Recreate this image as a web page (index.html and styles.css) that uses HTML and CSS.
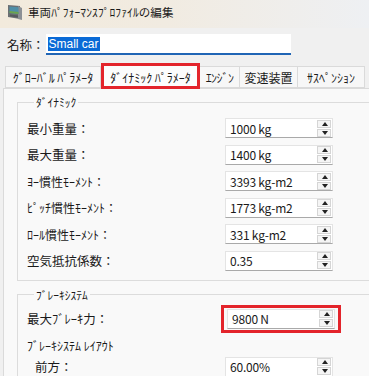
FILE: index.html
```html
<!DOCTYPE html>
<html lang="ja">
<head>
<meta charset="UTF-8" />
<meta name="viewport" content="width=device-width, initial-scale=1" />
<title>車両ﾊﾟﾌｫｰﾏﾝｽﾌﾟﾛﾌｧｲﾙの編集</title>
<link rel="stylesheet" href="styles.css">
</head>
<body>
  <div class="window">
    <div class="titlebar">
      <svg class="app-icon" width="18" height="18" viewBox="0 0 18 18" aria-hidden="true">
        <path d="M3 2 L15 3 L15 16 L3 14 Z" fill="#6b6f73"/>
        <path d="M13 3 L17 5 L17 17 L13 16 Z" fill="#8c9095"/>
        <path d="M4.5 3.5 L13.5 4.3 L13.5 11 L4.5 10 Z" fill="#4f8fa8"/>
        <path d="M4.5 8 L13.5 9 L13.5 11 L4.5 10 Z" fill="#6da34d"/>
        <path d="M5 11.5 L13 12.4 L13 14.5 L5 13.2 Z" fill="#55595d"/>
      </svg>
      <span class="title">車両ﾊﾟﾌｫｰﾏﾝｽﾌﾟﾛﾌｧｲﾙの編集</span>
    </div>

    <div class="name-row">
      <span class="name-label">名称：</span>
      <div class="name-input"><span class="selected">Small car</span></div>
    </div>

    <div class="tabs">
      <div class="tab tab-global">ｸﾞﾛｰﾊﾞﾙ ﾊﾟﾗﾒｰﾀ</div>
      <div class="tab tab-dynamic active">ﾀﾞｲﾅﾐｯｸ ﾊﾟﾗﾒｰﾀ</div>
      <div class="tab tab-engine">ｴﾝｼﾞﾝ</div>
      <div class="tab tab-trans">変速装置</div>
      <div class="tab tab-susp">ｻｽﾍﾟﾝｼｮﾝ</div>
    </div>

    <div class="panel">
      <fieldset class="group dynamics">
        <legend>ﾀﾞｲﾅﾐｯｸ</legend>
        <div class="row"><span class="label">最小重量：</span><div class="spin"><span class="value">1000 kg</span><span class="arrows"><i class="up"></i><i class="down"></i></span></div></div>
        <div class="row"><span class="label">最大重量：</span><div class="spin"><span class="value">1400 kg</span><span class="arrows"><i class="up"></i><i class="down"></i></span></div></div>
        <div class="row"><span class="label small">ﾖｰ慣性ﾓｰﾒﾝﾄ：</span><div class="spin"><span class="value">3393 kg-m2</span><span class="arrows"><i class="up"></i><i class="down"></i></span></div></div>
        <div class="row"><span class="label small">ﾋﾟｯﾁ慣性ﾓｰﾒﾝﾄ：</span><div class="spin"><span class="value">1773 kg-m2</span><span class="arrows"><i class="up"></i><i class="down"></i></span></div></div>
        <div class="row"><span class="label small">ﾛｰﾙ慣性ﾓｰﾒﾝﾄ：</span><div class="spin"><span class="value">331 kg-m2</span><span class="arrows"><i class="up"></i><i class="down"></i></span></div></div>
        <div class="row"><span class="label">空気抵抗係数：</span><div class="spin"><span class="value">0.35</span><span class="arrows"><i class="up"></i><i class="down"></i></span></div></div>
      </fieldset>

      <fieldset class="group brakes">
        <legend>ﾌﾞﾚｰｷｼｽﾃﾑ</legend>
        <div class="row"><span class="label">最大ﾌﾞﾚｰｷ力：</span><div class="highlight"><div class="spin"><span class="value">9800 N</span><span class="arrows"><i class="up"></i><i class="down"></i></span></div></div></div>
        <div class="subhead">ﾌﾞﾚｰｷｼｽﾃﾑ ﾚｲｱｳﾄ</div>
        <div class="row indent"><span class="label">前方：</span><div class="spin"><span class="value">60.00%</span><span class="arrows"><i class="up"></i><i class="down"></i></span></div></div>
      </fieldset>
    </div>
  </div>
</body>
</html>
```

FILE: styles.css
```css
/* Base */
* {
  box-sizing: border-box;
}
html, body {
  margin: 0;
  width: 369px;
  height: 376px;
  overflow: hidden;
  background: #f0f0f0;
  font-family: "Noto Sans CJK JP", "Noto Sans", sans-serif;
  font-size: 12px;
  color: #1a1a1a;
}

.window {
  width: 369px;
  height: 376px;
  overflow: hidden;
}

/* Title bar */
.titlebar {
  height: 28px;
  display: flex;
  align-items: center;
  gap: 5px;
  padding-left: 5px;
  background: linear-gradient(90deg, #f2eadc 0%, #f1ebe1 45%, #eef0f3 100%);
}
.title {
  font-size: 11.5px;
  letter-spacing: 0.1px;
  margin-top: -4px;
}
.app-icon {
  margin-top: -5px;
}

/* Name */
.name-row {
  display: flex;
  align-items: center;
  height: 32px;
  padding-left: 7px;
  gap: 1px;
}
.name-label {
  font-size: 12.5px;
}
.name-input {
  width: 245px;
  height: 21px;
  background: #fff;
  border-bottom: 2px solid #2065b5;
  padding: 3px 0 0 2px;
  font-family: "Liberation Sans", Arial, sans-serif;
  font-size: 12px;
  line-height: 14px;
}
.selected {
  background: #0a6ad6;
  color: #fff;
  padding: 0 1px;
}

/* Tabs */
.tabs {
  display: flex;
  height: 24px;
  margin-top: 4px;
  padding-left: 5px;
  align-items: flex-end;
}
.tab {
  height: 22px;
  line-height: 21px;
  text-align: center;
  background: #f7f7f7;
  border: 1px solid #dadada;
  border-left: none;
  font-size: 12px;
  white-space: nowrap;
}
.tab-global {
  width: 96px;
  border-left: 1px solid #dadada;
}
.tab-dynamic {
  width: 99px;
}
.tab-engine {
  width: 40px;
  letter-spacing: -0.6px;
}
.tab-trans {
  width: 58px;
}
.tab-susp {
  width: 67px;
}
.tab.active {
  height: 26px;
  line-height: 24px;
  background: #fcfcfc;
  border: 3px solid #e3242b;
  margin-bottom: -1px;
  position: relative;
}

/* Panel */
.panel {
  margin-left: 3px;
  background: #f9f9f9;
  border-top: 1px solid #dadada;
  border-left: 1px solid #dadada;
  padding: 6px 0 0 13px;
  height: 300px;
}

.group {
  margin: 0;
  border: 1px solid #dcdcdc;
  border-right: none;
  padding: 0 0 0 9px;
  min-width: 0;
}
.group legend {
  padding: 0 2px;
  margin-left: 7px;
  font-size: 11.5px;
  line-height: 14px;
}
.dynamics {
  padding-top: 9px;
  padding-bottom: 9px;
  display: flex;
  flex-direction: column;
  gap: 6.6px;
}
.brakes {
  margin-top: 7px;
  padding-top: 7px;
}

/* Rows */
.row {
  display: flex;
  align-items: center;
  height: 20px;
}
.label {
  width: 198px;
  font-size: 12.5px;
}
.label.small {
  font-size: 12px;
}
.subhead {
  height: 16px;
  line-height: 16px;
  margin: 9px 0 3px;
  font-size: 12px;
}
.indent .label {
  padding-left: 8px;
}

/* Spin box */
.spin {
  width: 108px;
  height: 20px;
  display: flex;
  align-items: center;
  justify-content: space-between;
  background: #fff;
  border: 1px solid #e4e4e4;
  border-bottom: 1px solid #a9a9a9;
  padding: 0 0 0 4px;
}
.value {
  font-size: 12px;
  letter-spacing: -0.2px;
}
.arrows {
  display: flex;
  flex-direction: column;
  gap: 1px;
  margin-right: 1px;
}
.arrows i {
  display: block;
  width: 14px;
  height: 8px;
  background: #f5f5f5;
  border: 1px solid #d5d5d5;
  position: relative;
}
.arrows i::after {
  content: "";
  position: absolute;
  left: 4px;
  top: 1px;
  border-left: 3px solid transparent;
  border-right: 3px solid transparent;
}
.arrows .up::after {
  border-bottom: 4px solid #222;
}
.arrows .down::after {
  border-top: 4px solid #222;
}

.highlight {
  border: 3px solid #e3242b;
  padding: 1px 3px;
  margin-left: -4px;
}
.highlight .spin {
  margin: 0;
}
```
